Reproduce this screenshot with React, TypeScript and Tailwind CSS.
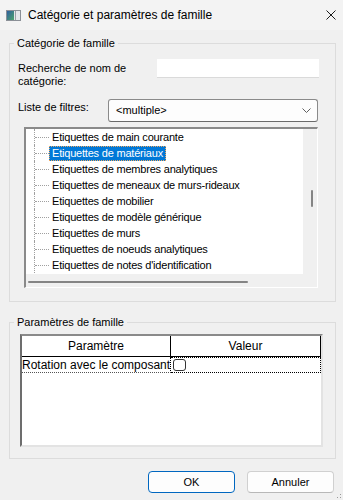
const treeItems = [
  "Etiquettes de main courante",
  "Etiquettes de matériaux",
  "Etiquettes de membres analytiques",
  "Etiquettes de meneaux de murs-rideaux",
  "Etiquettes de mobilier",
  "Etiquettes de modèle générique",
  "Etiquettes de murs",
  "Etiquettes de noeuds analytiques",
  "Etiquettes de notes d'identification",
];

const WinIcon = () => (
  <svg width="15" height="11" viewBox="0 0 15 11">
    <defs>
      <linearGradient id="g" x1="0" y1="0" x2="1" y2="1">
        <stop offset="0" stopColor="#2f5f9e" />
        <stop offset="1" stopColor="#4da56c" />
      </linearGradient>
    </defs>
    <rect x="0.5" y="0.5" width="14" height="10" fill="#e4e7ea" stroke="#8b9097" />
    <rect x="1" y="1" width="7" height="9" fill="url(#g)" />
    <rect x="9" y="1" width="1" height="9" fill="#9aa0a6" />
  </svg>
);

export default function App() {
  return (
    <div className="w-[343px] h-[500px] bg-[#f0f0f0] flex flex-col font-['Liberation_Sans',Arial,sans-serif] text-black relative overflow-hidden">
      {/* title bar */}
      <div className="h-[30px] shrink-0 bg-[#f3f3f3] flex items-center pl-[6px] pr-[7px]">
        <WinIcon />
        <span className="ml-[7px] text-[12px]">Catégorie et paramètres de famille</span>
        <svg className="ml-auto" width="10" height="10" viewBox="0 0 10 10">
          <path d="M0.5 0.5L9.5 9.5M9.5 0.5L0.5 9.5" stroke="#1a1a1a" strokeWidth="1" />
        </svg>
      </div>

      <div className="pl-[9px] flex flex-col text-[11px]">
        {/* group 1 */}
        <fieldset className="w-[327px] h-[266px] mt-[6px] border border-[#dcdcdc]">
          <legend className="ml-[4px] px-[3px] leading-[14px]">Catégorie de famille</legend>
          <div className="flex items-start mt-[9px] pl-[8px]">
            <div className="w-[139px] pt-[3px] leading-[13px]">
              Recherche de nom de
              <br />
              catégorie:
            </div>
            <div className="w-[162px] h-[19px] bg-white border-b border-[#dadada]" />
          </div>
          <div className="flex items-start mt-[11px] pl-[8px]">
            <div className="w-[90px] pt-[2px] leading-[13px]">Liste de filtres:</div>
            <div className="w-[210px] h-[23px] bg-[#fdfdfd] border border-[#8a8a8a] border-b-[#6a6a6a] rounded-[3px] flex items-center pl-[7px] pr-[6px]">
              <span>&lt;multiple&gt;</span>
              <svg className="ml-auto" width="9" height="5" viewBox="0 0 9 5">
                <path d="M0.5 0.5L4.5 4.5L8.5 0.5" fill="none" stroke="#606060" strokeWidth="1" />
              </svg>
            </div>
          </div>
          {/* tree list */}
          <div className="mt-[5px] ml-[14px] w-[294px] h-[161px] flex flex-col border-t-2 border-l-2 border-t-[#8a8a8a] border-l-[#8a8a8a] border-r border-b border-r-white border-b-white">
            <div className="flex h-[145px]">
              <div className="w-[277px] bg-white overflow-hidden flex flex-col">
                {treeItems.map((label, i) => (
                  <div key={label} className="h-[16px] shrink-0 flex items-stretch">
                    <div className="w-[8px]" />
                    <div className="w-[15px] border-l border-dotted border-[#a0a0a0] flex items-center">
                      <div className="w-full h-0 border-t border-dotted border-[#a0a0a0]" />
                    </div>
                    <div className="flex items-center">
                      <div
                        className={`h-[15px] px-[2px] flex items-center whitespace-nowrap tracking-[-0.2px] border border-dotted ${
                          i === 1 ? "bg-[#0078d7] text-white border-[#f0a860]" : "border-transparent"
                        }`}
                      >
                        {label}
                      </div>
                    </div>
                  </div>
                ))}
              </div>
              <div className="flex-1 bg-[#f0f0f0] pl-[8px] pt-[61px]">
                <div className="w-[2px] h-[17px] bg-[#858585] rounded-[1px]" />
              </div>
            </div>
            <div className="flex-1 bg-[#f0f0f0] pl-[2px] pt-[7px]">
              <div className="w-[220px] h-[2px] bg-[#858585] rounded-[1px]" />
            </div>
          </div>
        </fieldset>

        {/* group 2 */}
        <fieldset className="w-[327px] h-[144px] mt-[13px] border border-[#dcdcdc]">
          <legend className="ml-[4px] px-[3px] leading-[14px]">Paramètres de famille</legend>
          <div className="mt-[5px] ml-[10px] w-[303px] h-[113px] bg-white flex flex-col text-[12px] border-t-2 border-l-2 border-t-[#8a8a8a] border-l-[#6d6d6d] border-r-2 border-b-2 border-r-[#e3e3e3] border-b-[#e3e3e3]">
            <div className="flex h-[21px] border-b border-black">
              <div className="w-[149px] border-r border-black flex items-center justify-center">Paramètre</div>
              <div className="w-[150px] border-r border-black flex items-center justify-center">Valeur</div>
            </div>
            <div className="flex h-[16px]">
              <div className="w-[149px] border-r border-black border-b border-b-[#555] border-dotted flex items-center whitespace-nowrap overflow-hidden">
                Rotation avec le composant
              </div>
              <div className="w-[150px] border-t border-t-black border-r border-b border-dotted border-r-black border-b-black flex items-center pl-[2px]">
                <div className="w-[13px] h-[12px] rounded-[3px] border border-[#333] bg-white" />
              </div>
            </div>
          </div>
        </fieldset>
      </div>

      {/* buttons */}
      <div className="flex justify-end gap-[12px] pr-[9px] mt-[12px] text-[11px]">
        <button className="w-[87px] h-[22px] rounded-[4px] bg-[#fdfdfd] border border-[#0067c0]">OK</button>
        <button className="w-[87px] h-[22px] rounded-[4px] bg-[#fdfdfd] border border-[#d0d0d0] border-b-[#b8b8b8]">Annuler</button>
      </div>

      <svg className="absolute right-[1px] bottom-[1px]" width="5" height="5" viewBox="0 0 5 5">
        <rect x="3" y="0" width="1" height="1" fill="#9a9a9a" />
        <rect x="0" y="3" width="1" height="1" fill="#9a9a9a" />
        <rect x="3" y="3" width="1" height="1" fill="#9a9a9a" />
      </svg>
    </div>
  );
}
